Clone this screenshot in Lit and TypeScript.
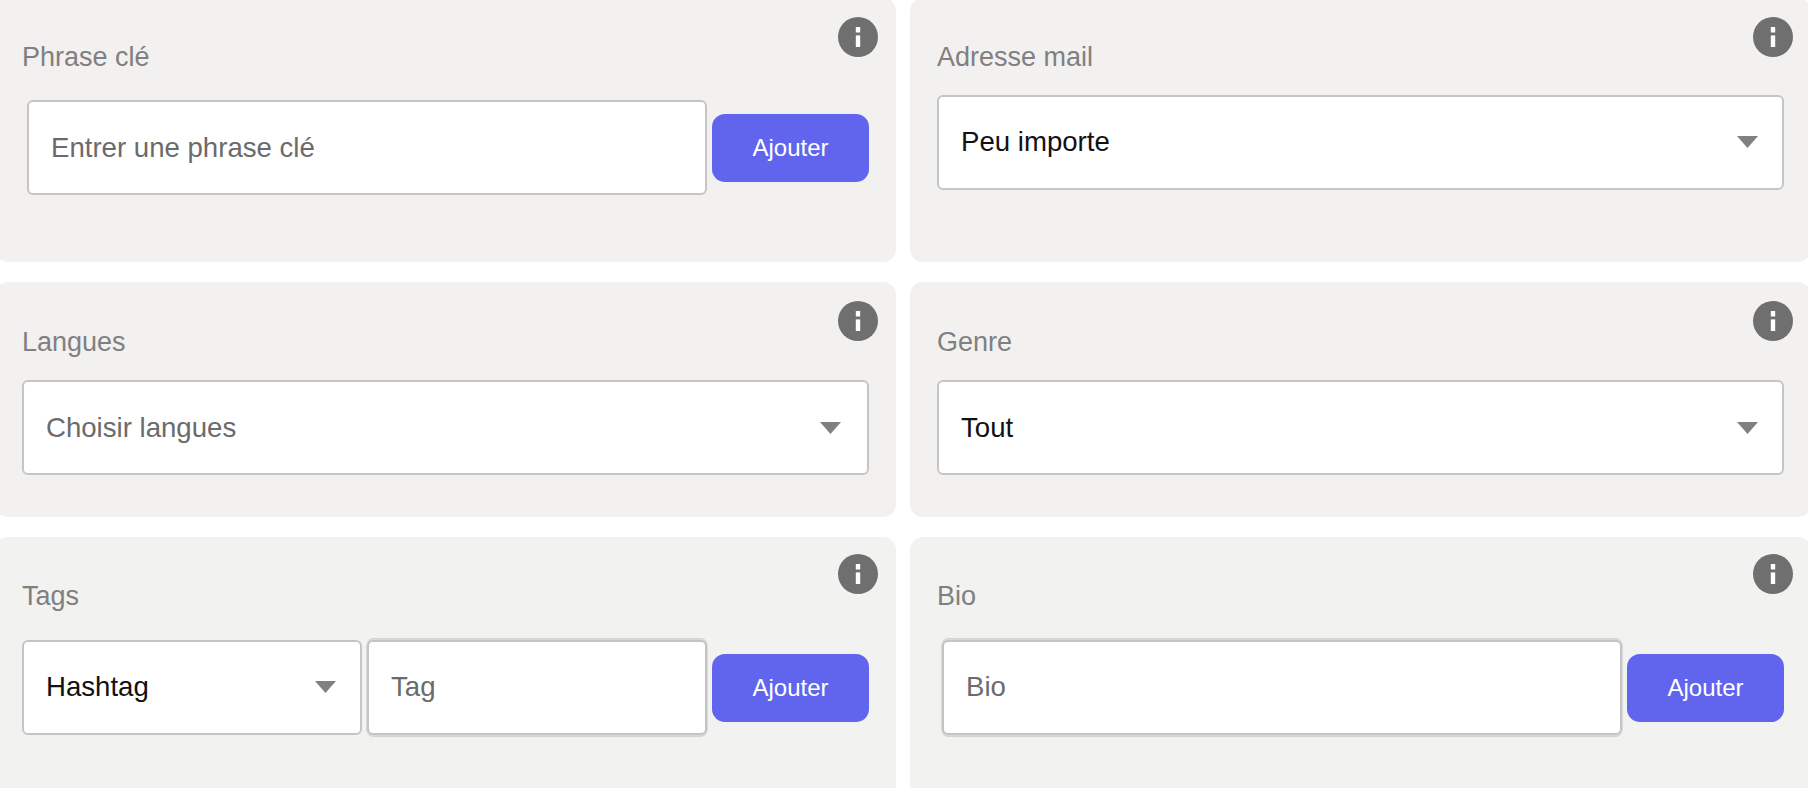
import { LitElement, html, css } from "lit";
import { customElement } from "lit/decorators.js";

const info = html`<svg class="info" viewBox="0 0 40 40" aria-hidden="true">
  <circle cx="20" cy="20" r="20" fill="#6f6f6f"></circle>
  <rect x="17.8" y="10" width="4.4" height="5.5" fill="#fff"></rect>
  <rect x="17.8" y="18.4" width="4.4" height="11.6" fill="#fff"></rect>
</svg>`;

const arrow = html`<svg class="arrow" viewBox="0 0 21 12" aria-hidden="true"><path d="M0 0H21L10.5 12Z" fill="#808080"></path></svg>`;

@customElement("app-root")
export class AppRoot extends LitElement {
  static styles = css`
    :host {
      display: block;
      width: 1808px;
      height: 788px;
      overflow: hidden;
      background: #fff;
      font-family: "Liberation Sans", Arial, sans-serif;
    }
    .grid {
      display: grid;
      grid-template-columns: 901px 901px;
      grid-template-rows: 264px 235px 300px;
      column-gap: 14px;
      row-gap: 20px;
      margin: -2px 0 0 -5px;
    }
    .card {
      position: relative;
      background: #f2f1f0;
      border-radius: 13px;
      padding: 0 27px;
      box-sizing: border-box;
    }
    .last { background: #f2f2f1; }
    .info {
      position: absolute;
      top: 19px;
      right: 18px;
      width: 40px;
      height: 40px;
    }
    .last .info { top: 17px; }
    .label {
      color: #808080;
      font-size: 27px;
      line-height: 30px;
      padding-top: 44px;
    }
    .mid .label { padding-top: 45px; }
    .row {
      display: flex;
      align-items: center;
    }
    .r1 { margin-top: 28px; padding-left: 5px; height: 95px; }
    .r2 { margin-top: 22px; height: 96px; }
    .r3 { margin-top: 23px; height: 95px; }
    .r4 { margin-top: 27px; height: 98px; }
    .r4 .add { margin-top: 2px; }
    .field {
      box-sizing: border-box;
      height: 95px;
      background: #fff;
      border: 2px solid #c5c5c5;
      border-radius: 6px;
      display: flex;
      align-items: center;
      justify-content: space-between;
      padding: 0 24px 0 22px;
      font-size: 27.6px;
      color: #111;
    }
    .grow { flex: 1; }
    .ph { color: #6b6b6b; }
    .tall {
      height: 95px;
      border-color: #c4c4c4;
      box-shadow: 0 0 0 1px #dadada, 0 2px 0 0 #d4d4d4, 0 -2px 0 0 #d4d4d4;
    }
    .hash { width: 340px; margin-right: 5px; }
    .wide { padding-right: 26px; }
    .w680 { width: 680px; }
    .bio { margin-left: 5px; }
    .arrow { width: 21px; height: 12px; flex: none; }
    .add {
      box-sizing: border-box;
      width: 157px;
      height: 68px;
      margin-left: 5px;
      background: #6165ee;
      color: #fff;
      border: 0;
      border-radius: 13px;
      font: 24px "Liberation Sans", Arial, sans-serif;
      padding: 0;
    }
  `;

  render() {
    return html`<div class="grid">
      <section class="card">
        ${info}
        <div class="label">Phrase clé</div>
        <div class="row r1">
          <div class="field ph w680">Entrer une phrase clé</div>
          <button class="add">Ajouter</button>
        </div>
      </section>
      <section class="card">
        ${info}
        <div class="label">Adresse mail</div>
        <div class="row r2">
          <div class="field grow"><span>Peu importe</span>${arrow}</div>
        </div>
      </section>
      <section class="card mid">
        ${info}
        <div class="label">Langues</div>
        <div class="row r3">
          <div class="field grow ph wide"><span>Choisir langues</span>${arrow}</div>
        </div>
      </section>
      <section class="card mid">
        ${info}
        <div class="label">Genre</div>
        <div class="row r3">
          <div class="field grow"><span>Tout</span>${arrow}</div>
        </div>
      </section>
      <section class="card last">
        ${info}
        <div class="label">Tags</div>
        <div class="row r4">
          <div class="field hash"><span>Hashtag</span>${arrow}</div>
          <div class="field ph tall grow">Tag</div>
          <button class="add">Ajouter</button>
        </div>
      </section>
      <section class="card last">
        ${info}
        <div class="label">Bio</div>
        <div class="row r4">
          <div class="field ph tall w680 bio">Bio</div>
          <button class="add">Ajouter</button>
        </div>
      </section>
    </div>`;
  }
}
